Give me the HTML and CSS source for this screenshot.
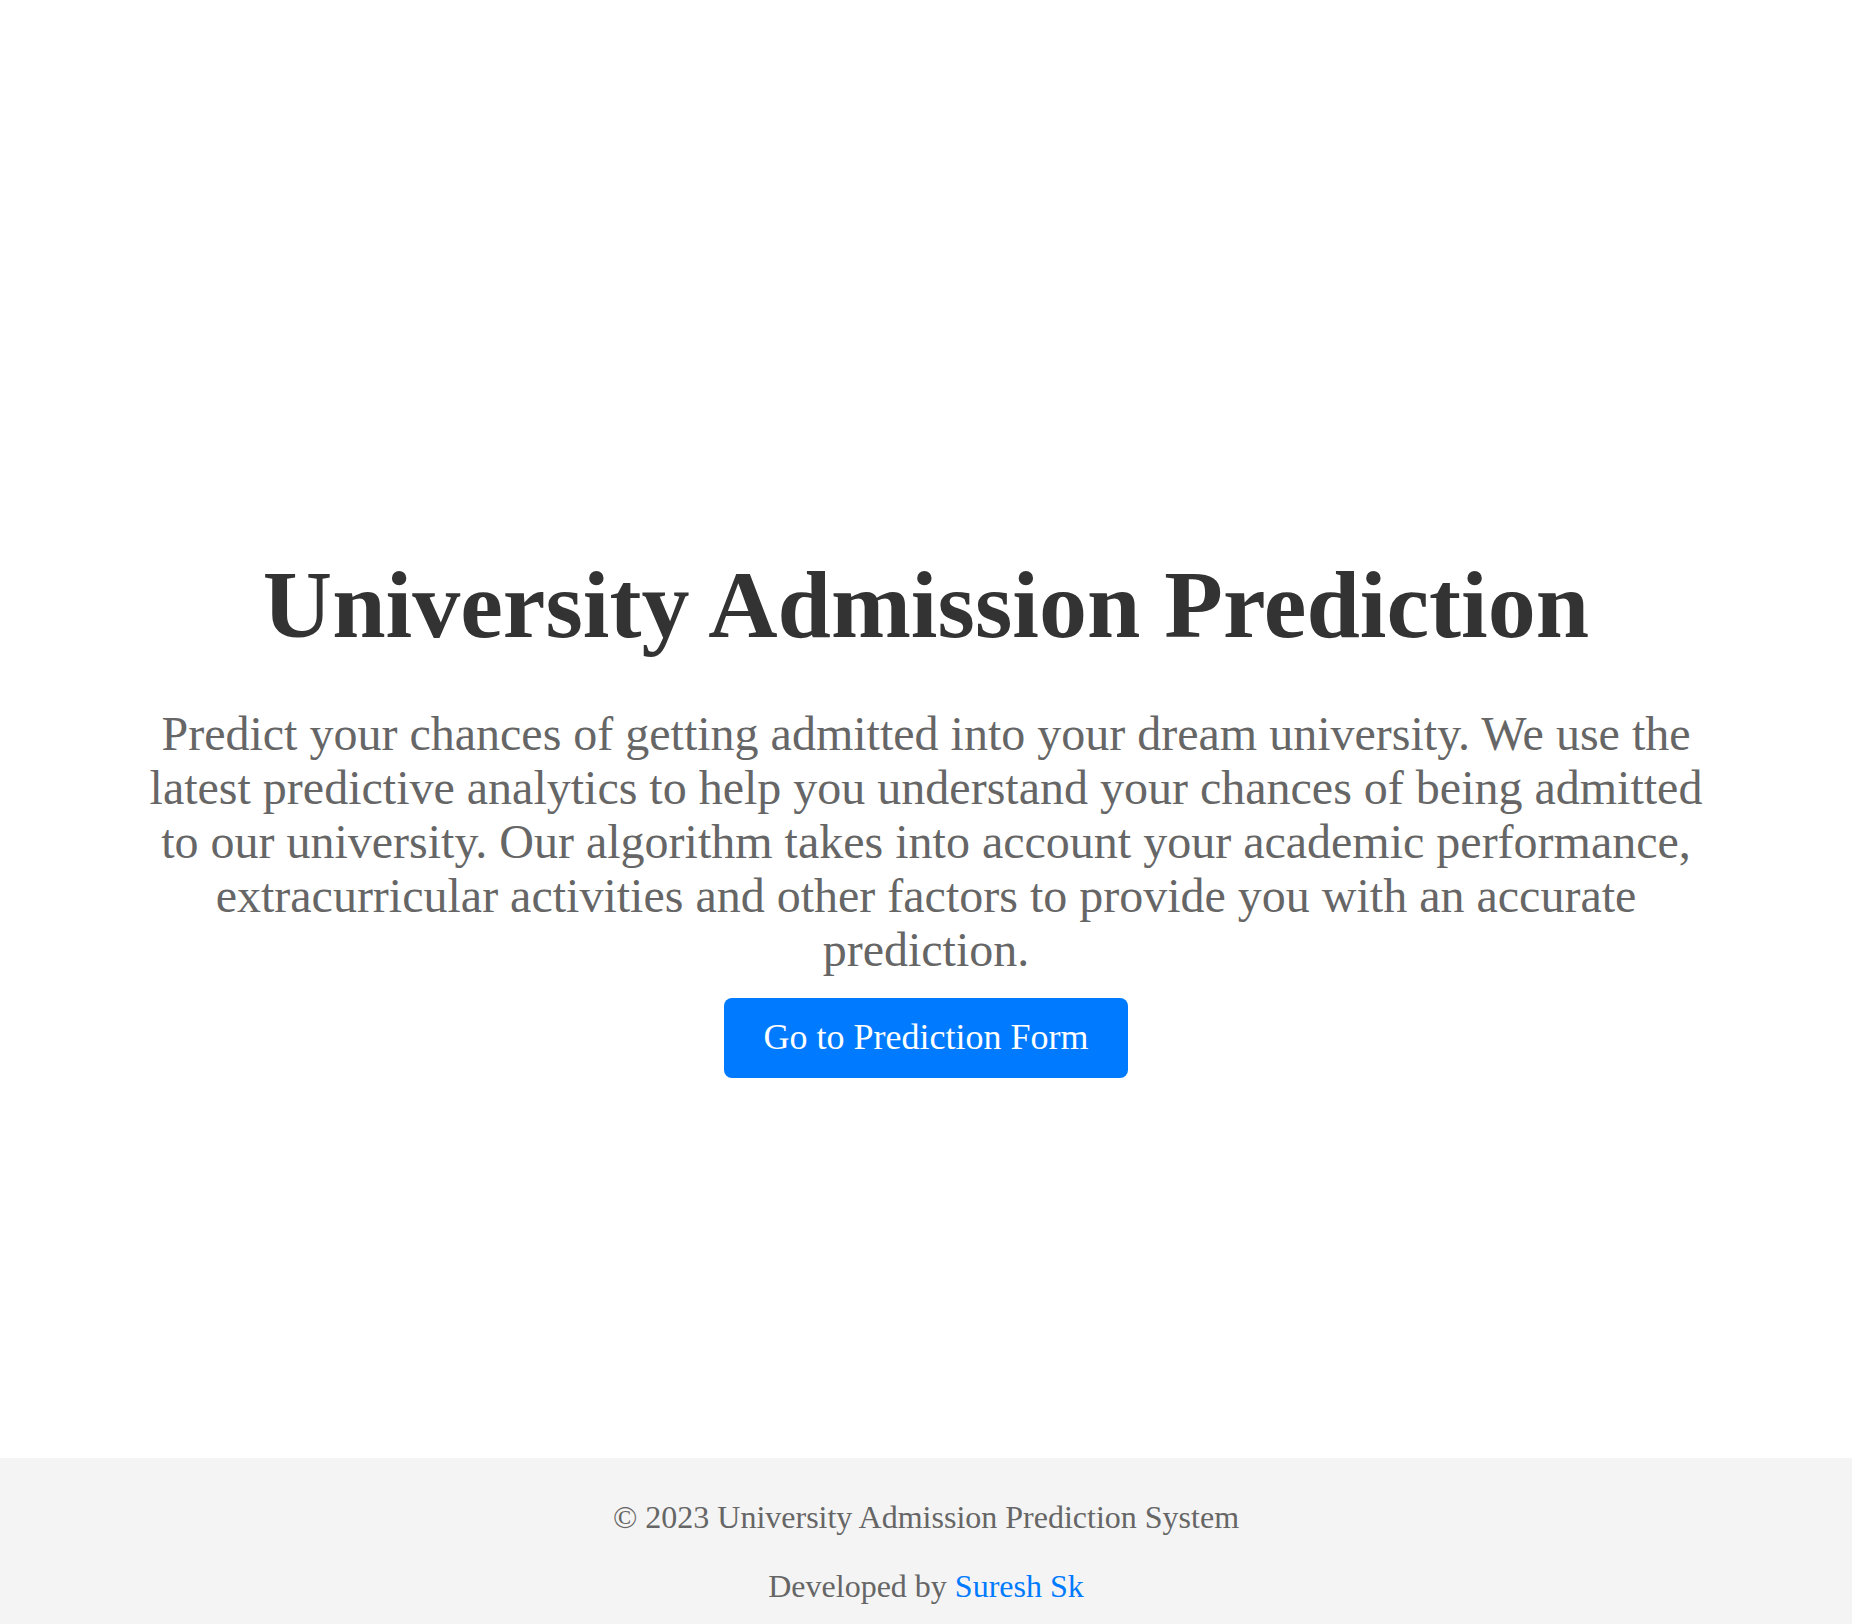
FILE: index.html
```html
<!DOCTYPE html>
<html lang="en">
<head>
<meta charset="utf-8">
<title>University Admission Prediction</title>
<link rel="stylesheet" href="styles.css">
</head>
<body>
<main class="hero">
  <div class="hero-inner">
    <h1 class="title">University Admission Prediction</h1>
    <p class="lead">Predict your chances of getting admitted into your dream university. We use the latest predictive analytics to help you understand your chances of being admitted to our university. Our algorithm takes into account your academic performance, extracurricular activities and other factors to provide you with an accurate prediction.</p>
    <a class="btn" href="#">Go to Prediction Form</a>
  </div>
</main>
<footer class="footer">
  <p class="footer-line">&copy; 2023 University Admission Prediction System</p>
  <p class="footer-line">Developed by <a class="footer-link" href="#">Suresh Sk</a></p>
</footer>
</body>
</html>
```

FILE: styles.css
```css
html, body {
  margin: 0;
  padding: 0;
}
body {
  font-family: "Liberation Serif", "Times New Roman", serif;
  background: #ffffff;
  line-height: 1.107;
}
.hero {
  min-height: 100vh;
  box-sizing: border-box;
  padding-top: 6px;
  display: flex;
  align-items: center;
  justify-content: center;
}
.hero-inner {
  width: 1600px;
  display: flex;
  flex-direction: column;
  align-items: center;
  text-align: center;
}
.title {
  margin: 0;
  font-size: 96px;
  font-weight: bold;
  color: #333333;
}
.lead {
  margin: 48px 0 0;
  font-size: 48px;
  line-height: 54px;
  color: #666666;
}
.btn {
  margin-top: 21px;
  display: inline-block;
  background: #007bff;
  color: #ffffff;
  text-decoration: none;
  font-size: 36px;
  padding: 20px 40px;
  border-radius: 8px;
}
.footer {
  position: fixed;
  left: 0;
  right: 0;
  bottom: 0;
  background: #f4f4f4;
  padding: 41px 0 19px;
  display: flex;
  flex-direction: column;
  align-items: center;
  gap: 32px;
  line-height: normal;
}
.footer-line {
  margin: 0;
  font-size: 32px;
  color: #666666;
}
.footer-link {
  color: #007bff;
  text-decoration: none;
}
```
